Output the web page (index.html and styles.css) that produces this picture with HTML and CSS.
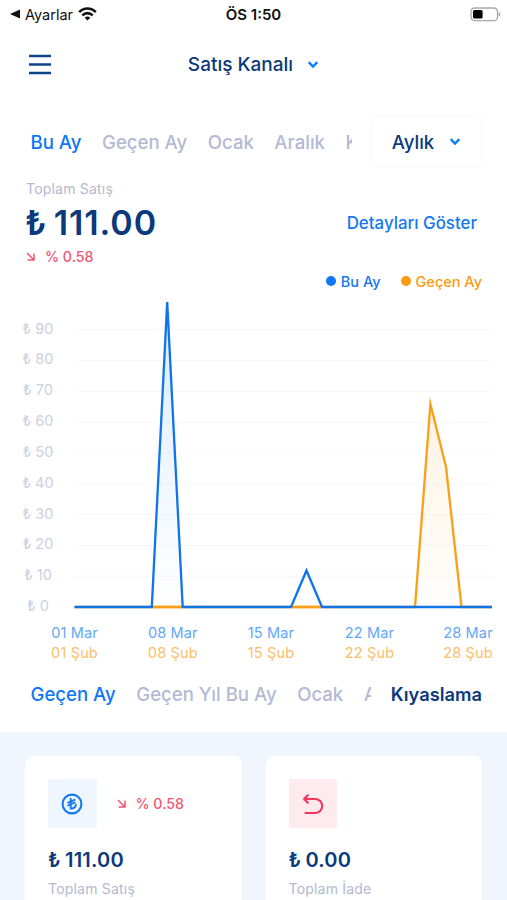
FILE: index.html
```html
<!DOCTYPE html>
<html lang="tr">
<head>
    <meta charset="UTF-8">
    <meta name="viewport" content="width=device-width, initial-scale=1.0">
    <title>Satış Kanalı</title>
    <link rel="stylesheet" href="styles.css">
</head>
<body>
    <div class="status-bar">
        <div class="status-back">
            <svg width="10" height="10" viewBox="0 0 10 10"><path d="M0 5 L10 0.5 V9.5 Z" fill="#111"/></svg>
            <span>Ayarlar</span>
            <svg class="wifi" width="19" height="14" viewBox="0 0 19 14" fill="none" stroke="#111" stroke-width="2.6">
                <path d="M1.2 5.2 C6 0.3 13 0.3 17.8 5.2"/>
                <path d="M4.3 8.4 C7.3 5.4 11.7 5.4 14.7 8.4"/>
                <path d="M6.7 10.7 C8.4 9.2 10.6 9.2 12.3 10.7 L9.5 13.6 Z" fill="#111" stroke="none"/>
            </svg>
        </div>
        <div class="status-time">ÖS 1:50</div>
        <div class="status-battery">
            <svg width="31" height="15" viewBox="0 0 31 15">
                <rect x="1" y="1" width="26.5" height="12.6" rx="3.6" fill="#fff" stroke="#a9a9a9" stroke-width="1.3"/>
                <rect x="3" y="3" width="9.6" height="8.6" rx="1.6" fill="#000"/>
                <path d="M28.6 5 C31 5.8 31 8.8 28.6 9.6 Z" fill="#a9a9a9"/>
            </svg>
        </div>
    </div>

    <header class="header">
        <button class="menu">
            <svg width="22" height="22" viewBox="0 0 22 22"><path d="M0 3 H22 M0 11.5 H22 M0 20 H22"/></svg>
        </button>
        <button class="channel">
            <span>Satış Kanalı</span>
            <svg width="12" height="9" viewBox="0 0 12 9"><path d="M1.7 2.2 L6 6.5 L10.3 2.2"/></svg>
        </button>
    </header>

    <div class="period">
        <nav class="tabs period-tabs">
            <a class="active">Bu Ay</a>
            <a>Geçen Ay</a>
            <a>Ocak</a>
            <a>Aralık</a>
            <a>K</a>
        </nav>
        <button class="select">
            <span>Aylık</span>
            <svg width="12" height="9" viewBox="0 0 12 9"><path d="M1.7 2.2 L6 6.5 L10.3 2.2"/></svg>
        </button>
    </div>

    <div class="summary">
        <div>
            <div class="summary-label">Toplam Satış</div>
            <div class="summary-amount">₺ 111.00</div>
            <div class="change">
                <svg width="9" height="9" viewBox="0 0 9 9"><path d="M1 1 L7.7 7.7 M8 1.6 V8 H1.6"/></svg>
                <span>% 0.58</span>
            </div>
        </div>
        <a class="details">Detayları Göster</a>
    </div>

    <div class="legend">
        <span class="legend-item current">Bu Ay</span>
        <span class="legend-item previous">Geçen Ay</span>
    </div>

    <svg class="chart" width="507" height="370" viewBox="0 295 507 370">
        <defs>
            <linearGradient id="blueFill" x1="0" y1="0" x2="0" y2="1">
                <stop offset="0" stop-color="#007aff" stop-opacity="0.14"/>
                <stop offset="1" stop-color="#007aff" stop-opacity="0"/>
            </linearGradient>
            <linearGradient id="orangeFill" x1="0" y1="0" x2="0" y2="1">
                <stop offset="0" stop-color="#ff9500" stop-opacity="0.11"/>
                <stop offset="1" stop-color="#ff9500" stop-opacity="0.01"/>
            </linearGradient>
        </defs>
        <g class="grid">
            <path d="M76 329.8 H492 M76 360.6 H492 M76 391.4 H492 M76 422.2 H492 M76 453 H492 M76 483.8 H492 M76 514.6 H492 M76 545.4 H492 M76 576.2 H492"/>
        </g>
        <g class="y-labels">
            <text x="38" y="333.5">₺ 90</text>
            <text x="38" y="364.3">₺ 80</text>
            <text x="38" y="395.2">₺ 70</text>
            <text x="38" y="426">₺ 60</text>
            <text x="38" y="456.8">₺ 50</text>
            <text x="38" y="487.7">₺ 40</text>
            <text x="38" y="518.5">₺ 30</text>
            <text x="38" y="549.4">₺ 20</text>
            <text x="38" y="580.2">₺ 10</text>
            <text x="38" y="611">₺ 0</text>
        </g>
        <path d="M415 607 L430.4 404 L446 467 L461.5 607 Z" fill="url(#orangeFill)"/>
        <path class="line-previous" d="M74.5 607 H415 L430.4 404 L446 467 L461.5 607 H492"/>
        <path d="M151.8 607 L167.2 302 L182.7 607 Z" fill="url(#blueFill)"/>
        <path class="line-current" d="M74.5 607 H151.8 L167.2 302 L182.7 607 H291 L306.5 570.5 L322 607 H492"/>
        <path class="line-previous" d="M153.5 607 H181 M292.8 607 H320.2"/>
        <g class="x-labels current">
            <text x="74.5" y="638">01 Mar</text>
            <text x="172.8" y="638">08 Mar</text>
            <text x="271" y="638">15 Mar</text>
            <text x="369.5" y="638">22 Mar</text>
            <text x="468" y="638">28 Mar</text>
        </g>
        <g class="x-labels previous">
            <text x="74.5" y="657.5">01 Şub</text>
            <text x="172.8" y="657.5">08 Şub</text>
            <text x="271" y="657.5">15 Şub</text>
            <text x="369.5" y="657.5">22 Şub</text>
            <text x="468" y="657.5">28 Şub</text>
        </g>
    </svg>

    <div class="compare">
        <nav class="tabs compare-tabs">
            <a class="active">Geçen Ay</a>
            <a>Geçen Yıl Bu Ay</a>
            <a>Ocak</a>
            <a>A</a>
        </nav>
        <span class="compare-title">Kıyaslama</span>
    </div>

    <section class="cards">
        <div class="card">
            <div class="card-top">
                <div class="card-icon blue">
                    <svg width="22" height="22" viewBox="0 0 22 22" fill="none" stroke="#1479f5">
                        <circle cx="11" cy="11" r="9.4" stroke-width="2.1"/>
                        <path d="M9.7 5.8 V15.6 C13 15.8 14.8 14 14.8 11.4 M7.2 9.6 L13.5 6.8 M7.2 12.4 L13.5 9.6" stroke-width="1.9" stroke-linecap="round"/>
                    </svg>
                </div>
                <div class="change">
                    <svg width="9" height="9" viewBox="0 0 9 9"><path d="M1 1 L7.7 7.7 M8 1.6 V8 H1.6"/></svg>
                    <span>% 0.58</span>
                </div>
            </div>
            <div class="card-amount">₺ 111.00</div>
            <div class="card-label">Toplam Satış</div>
        </div>
        <div class="card">
            <div class="card-top">
                <div class="card-icon red">
                    <svg width="22" height="22" viewBox="0 0 22 22" fill="none" stroke="#f5365c" stroke-width="2.1" stroke-linecap="round" stroke-linejoin="round">
                        <path d="M5.8 2.2 L2 6 L5.8 9.8 M2 6 H13.2 A7 7 0 0 1 13.2 20 H3.4"/>
                    </svg>
                </div>
            </div>
            <div class="card-amount">₺ 0.00</div>
            <div class="card-label">Toplam İade</div>
        </div>
    </section>
</body>
</html>
```

FILE: styles.css
```css
* {
    box-sizing: border-box;
}

body {
    margin: 0;
    height: 900px;
    overflow: hidden;
    background-color: #fff;
    font-family: Inter, "Liberation Sans", sans-serif;
    color: #0a3a7c;
}

button {
    padding: 0;
    border: none;
    background: none;
    font: inherit;
    color: inherit;
}

svg {
    display: block;
}

.status-bar {
    display: grid;
    grid-template-columns: 1fr auto 1fr;
    align-items: center;
    height: 28px;
    padding: 0 6px;
    font-size: 14.5px;
    color: #111;
}

.status-back {
    display: flex;
    align-items: center;
    gap: 5px;
    padding-left: 4px;
}

.status-time {
    font-size: 15px;
    font-weight: 600;
}

.status-battery {
    display: flex;
    justify-content: flex-end;
}

.header {
    display: grid;
    grid-template-columns: 1fr auto 1fr;
    align-items: center;
    height: 72px;
    padding: 0 29px;
}

.menu {
    width: 22px;
}

.menu path {
    stroke: #0d4488;
    stroke-width: 2.3;
}

.channel {
    display: flex;
    align-items: center;
    gap: 14px;
    font-size: 19px;
    font-weight: 500;
}

.channel path,
.select path {
    fill: none;
    stroke: #0d7bff;
    stroke-width: 2.4;
}

.period {
    display: flex;
    justify-content: space-between;
    align-items: center;
    height: 51px;
    margin-top: 16px;
    padding: 0 25px 0 30.5px;
}

.tabs {
    display: flex;
    gap: 20.5px;
    overflow: hidden;
    font-size: 18.6px;
    font-weight: 500;
    line-height: 28px;
    color: #b3b9d4;
    white-space: nowrap;
}

.tabs .active {
    color: #0d76f5;
}

.period-tabs {
    width: 321.5px;
}

.select {
    display: flex;
    justify-content: center;
    align-items: center;
    gap: 15px;
    width: 111px;
    height: 51px;
    border: 1px solid #f7f8fa;
    border-radius: 6px;
    font-size: 18.6px;
    font-weight: 500;
}

.summary {
    display: flex;
    justify-content: space-between;
    align-items: center;
    height: 100px;
    padding: 11px 30px 0 26px;
}

.summary-label {
    font-size: 14px;
    line-height: 20px;
    letter-spacing: 0.2px;
    color: #b3b9d0;
}

.summary-amount {
    margin-left: -1px;
    font-size: 34px;
    font-weight: 600;
    line-height: 48px;
    letter-spacing: 0.9px;
    word-spacing: -3px;
}

.change {
    display: flex;
    align-items: center;
    gap: 10px;
    font-size: 14.2px;
    font-weight: 500;
    line-height: 20px;
    color: #f25672;
}

.change path {
    fill: none;
    stroke: #f25672;
    stroke-width: 1.5;
}

.details {
    font-size: 16.9px;
    font-weight: 500;
    color: #1478f0;
}

.legend {
    display: flex;
    justify-content: flex-end;
    height: 28px;
    gap: 20px;
    padding-right: 25px;
    font-size: 14.5px;
    font-weight: 500;
}

.legend-item {
    display: flex;
    align-items: center;
    gap: 5px;
}

.legend-item::before {
    content: "";
    width: 10px;
    height: 10px;
    border-radius: 50%;
    background-color: currentColor;
}

.legend-item.current {
    color: #1277f3;
}

.legend-item.previous {
    color: #fc9a10;
}

.grid path {
    stroke: #f6f7f9;
}

.line-current,
.line-previous {
    fill: none;
    stroke-width: 2.3;
    stroke-miterlimit: 8;
}

.line-current {
    stroke: #0f74ea;
}

.line-previous {
    stroke: #f99f1b;
}

.y-labels,
.x-labels {
    font-size: 14.5px;
    text-anchor: middle;
}

.y-labels {
    fill: #ccd0e0;
}

.x-labels {
    letter-spacing: 0.15px;
}

.x-labels.current {
    fill: #62a7f8;
}

.x-labels.previous {
    fill: #fdbd69;
}

.compare {
    display: flex;
    justify-content: space-between;
    align-items: center;
    height: 67px;
    padding: 0 25px 9px 30.5px;
}

.compare-tabs {
    width: 340.5px;
}

.compare-title {
    font-size: 18.3px;
    font-weight: 600;
}

.cards {
    display: grid;
    grid-template-columns: 1fr 1fr;
    gap: 24px;
    height: 200px;
    padding: 24px 25px 0;
    background-color: #f1f5fe;
}

.card {
    padding: 23px;
    border-radius: 9px;
    background-color: #fff;
}

.card-top {
    display: flex;
    align-items: center;
    gap: 20px;
}

.card-icon {
    display: flex;
    justify-content: center;
    align-items: center;
    width: 48.5px;
    height: 49px;
    border-radius: 2px;
}

.card-icon.blue {
    background-color: #f0f6fe;
}

.card-icon.red {
    background-color: #ffebee;
}

.card-amount {
    margin-top: 18px;
    font-size: 20px;
    font-weight: 600;
    line-height: 28px;
    letter-spacing: 0.2px;
    word-spacing: -1px;
}

.card-label {
    margin-top: 5px;
    font-size: 14px;
    line-height: 20px;
    letter-spacing: 0.2px;
    color: #b3b9d0;
}
```
